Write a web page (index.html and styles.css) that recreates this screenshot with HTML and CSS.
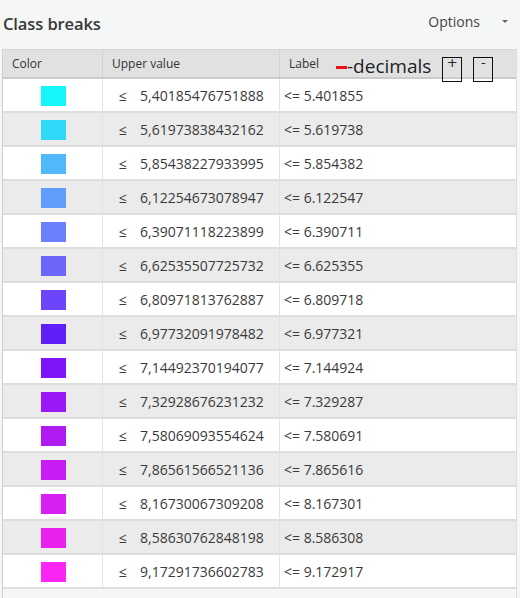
FILE: index.html
```html
<!DOCTYPE html>
<html lang="en">
<head>
  <meta charset="UTF-8">
  <title>Class breaks</title>
  <link rel="stylesheet" href="styles.css">
</head>
<body>
  <div class="topbar">
    <h2 class="title">Class breaks</h2>
    <div class="options">Options <span class="caret"></span></div>
  </div>
  <div class="grid-wrap">
    <table class="breaks">
      <thead>
        <tr>
          <th class="col-color">Color</th>
          <th class="col-upper">Upper value</th>
          <th class="col-label">Label</th>
        </tr>
      </thead>
      <tbody>
        <tr><td class="col-color"><span class="swatch" style="background:#14f6f9"></span></td><td class="col-upper"><span class="le">≤</span>5,40185476751888</td><td>&lt;= 5.401855</td></tr>
        <tr><td class="col-color"><span class="swatch" style="background:#30d9f7"></span></td><td class="col-upper"><span class="le">≤</span>5,61973838432162</td><td>&lt;= 5.619738</td></tr>
        <tr><td class="col-color"><span class="swatch" style="background:#4fb9fa"></span></td><td class="col-upper"><span class="le">≤</span>5,85438227933995</td><td>&lt;= 5.854382</td></tr>
        <tr><td class="col-color"><span class="swatch" style="background:#609dfc"></span></td><td class="col-upper"><span class="le">≤</span>6,12254673078947</td><td>&lt;= 6.122547</td></tr>
        <tr><td class="col-color"><span class="swatch" style="background:#6b81fb"></span></td><td class="col-upper"><span class="le">≤</span>6,39071118223899</td><td>&lt;= 6.390711</td></tr>
        <tr><td class="col-color"><span class="swatch" style="background:#6d66fb"></span></td><td class="col-upper"><span class="le">≤</span>6,62535507725732</td><td>&lt;= 6.625355</td></tr>
        <tr><td class="col-color"><span class="swatch" style="background:#6c44fb"></span></td><td class="col-upper"><span class="le">≤</span>6,80971813762887</td><td>&lt;= 6.809718</td></tr>
        <tr><td class="col-color"><span class="swatch" style="background:#611ff8"></span></td><td class="col-upper"><span class="le">≤</span>6,97732091978482</td><td>&lt;= 6.977321</td></tr>
        <tr><td class="col-color"><span class="swatch" style="background:#7c15f8"></span></td><td class="col-upper"><span class="le">≤</span>7,14492370194077</td><td>&lt;= 7.144924</td></tr>
        <tr><td class="col-color"><span class="swatch" style="background:#9b18f6"></span></td><td class="col-upper"><span class="le">≤</span>7,32928676231232</td><td>&lt;= 7.329287</td></tr>
        <tr><td class="col-color"><span class="swatch" style="background:#b21af4"></span></td><td class="col-upper"><span class="le">≤</span>7,58069093554624</td><td>&lt;= 7.580691</td></tr>
        <tr><td class="col-color"><span class="swatch" style="background:#c61df3"></span></td><td class="col-upper"><span class="le">≤</span>7,86561566521136</td><td>&lt;= 7.865616</td></tr>
        <tr><td class="col-color"><span class="swatch" style="background:#d820f2"></span></td><td class="col-upper"><span class="le">≤</span>8,16730067309208</td><td>&lt;= 8.167301</td></tr>
        <tr><td class="col-color"><span class="swatch" style="background:#ea22f0"></span></td><td class="col-upper"><span class="le">≤</span>8,58630762848198</td><td>&lt;= 8.586308</td></tr>
        <tr><td class="col-color"><span class="swatch" style="background:#fb26f3"></span></td><td class="col-upper"><span class="le">≤</span>9,17291736602783</td><td>&lt;= 9.172917</td></tr>
      </tbody>
    </table>
    <div class="decimals">
      <span class="dash"></span>-decimals
      <button class="dec-btn">+</button>
      <button class="dec-btn">-</button>
    </div>
  </div>
</body>
</html>
```

FILE: styles.css
```css
html, body {
  margin: 0;
  padding: 0;
  background-color: #f5f6f6;
  color: #333;
  font-family: 'Open Sans', 'Noto Sans', sans-serif;
}
.topbar {
  display: flex;
  justify-content: space-between;
  align-items: center;
  height: 44px;
  padding: 2px 12px 0 3px;
  box-sizing: border-box;
}
.title {
  margin: 0;
  font-size: 16.5px;
  font-weight: 600;
  color: #383838;
  letter-spacing: -0.1px;
}
.options {
  display: flex;
  align-items: center;
  font-size: 14px;
  color: #444;
  margin-top: -4px;
}
.caret {
  display: inline-block;
  margin-left: 22px;
  border-left: 3px solid transparent;
  border-right: 3px solid transparent;
  border-top: 3px solid #666;
}
.grid-wrap {
  position: relative;
  margin: 5px 3px 0 2px;
  border-left: 1px solid #cfcfcf;
  border-right: 1px solid #dcdcdc;
  height: 549px;
  background: #f5f6f6;
}
.breaks {
  width: 100%;
  border-collapse: collapse;
  table-layout: fixed;
  font-size: 14px;
}
.breaks th {
  height: 27px;
  padding: 0 0 0 9px;
  text-align: left;
  font-weight: normal;
  font-size: 12px;
  color: #333;
  background: #e1e1e1;
  border-top: 1px solid #d6d6d6;
  border-bottom: 2px solid #cbcbcb;
  border-right: 1px solid #d2d2d2;
}
.breaks td {
  height: 32px;
  padding: 0 0 0 4px;
  border-bottom: 2px solid #dedede;
  border-right: 1px solid #e2e2e2;
  color: #3a3a3a;
  background: #fff;
}
.breaks tbody tr:nth-child(even) td {
  background: #ebebeb;
}
.breaks .col-color {
  width: 90px;
}
.breaks .col-upper {
  width: 167px;
}
.breaks td.col-color {
  text-align: center;
  padding: 0;
}
.breaks td.col-upper {
  padding-left: 16px;
}
.breaks th.col-color,
.breaks th.col-upper {
  padding-left: 9px;
}
.breaks th:last-child,
.breaks td:last-child {
  border-right: none;
}
.swatch {
  display: inline-block;
  width: 25px;
  height: 20px;
  vertical-align: middle;
  margin-left: 2px;
}
.le {
  display: inline-block;
  width: 21px;
}
.decimals {
  position: absolute;
  top: 5px;
  left: 333px;
  display: flex;
  align-items: flex-start;
  font-size: 19px;
  color: #222;
  line-height: 24px;
}
.dash {
  display: inline-block;
  width: 11px;
  height: 3px;
  background: #e8111b;
  margin-top: 12px;
}
.dec-btn {
  width: 20px;
  height: 25px;
  margin: 3px 0 0 11px;
  padding: 0;
  border: 1px solid #111;
  background: transparent;
  font-family: 'DejaVu Sans', sans-serif;
  font-size: 13px;
  line-height: 10px;
  color: #222;
  display: flex;
  justify-content: center;
  align-items: flex-start;
}
.dec-btn + .dec-btn {
  margin-left: 11px;
}
```
